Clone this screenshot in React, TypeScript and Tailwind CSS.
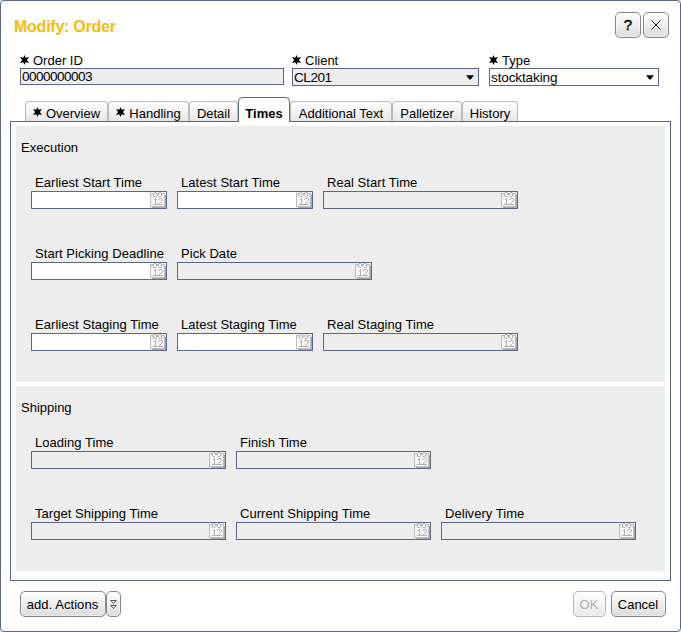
import React from "react";

function CalendarIcon() {
  return (
    <svg width="16" height="16" viewBox="0 0 16 16" shapeRendering="crispEdges" className="block shrink-0">
      <path d="M2 3h14v13H2z" fill="#a9a9a9" />
      <path d="M0 1h15v14H0z" fill="#bdbdbd" />
      <path d="M1 2h13v12H1z" fill="#e9e9e9" />
      <path d="M1 5h13v9H1z" fill="#f8f8f8" />
      <path d="M3 1h3v3H3zM9 1h3v3H9z" fill="#f5f5f5" />
      <path d="M4 0h2v1H4zM9 0h2v1H9zM3 1h1v3H3zM6 1h1v1H6zM8 1h1v1H8zM11 1h1v3h-1zM6 2h3v1H6zM4 4h2v1H4zM9 4h2v1H9z" fill="#b0b0b0" />
      <path d="M5 6h1v7H5zM4 7h1v1H4zM3 12h5v1H3zM9 6h3v1H9zM8 7h1v1H8zM12 7h1v2h-1zM11 9h1v1h-1zM10 10h1v1h-1zM9 11h1v1H9zM8 12h5v1H8z" fill="#b0b0b0" />
    </svg>
  );
}

function Star() {
  return (
    <svg width="9" height="10" viewBox="0 0 9 10" className="shrink-0">
      <path d="M4.5 0 5.7 2.7 9 2 6.9 5 9 8 5.7 7.3 4.5 10 3.3 7.3 0 8 2.1 5 0 2 3.3 2.7Z" fill="#000" />
    </svg>
  );
}

function HeadField({ label, value, box, select }: { label: string; value: string; box: string; select?: boolean }) {
  return (
    <div>
      <div className="flex h-[16px] items-center gap-[4px]">
        <Star />
        <span className="pt-[2px] leading-[16px]">{label}</span>
      </div>
      <div className={`flex items-center justify-between border border-[#5b6787] pl-px pr-[4px] text-[13.6px] leading-[15px] ${box}`}>
        <span>{value}</span>
        {select && (
          <svg width="8" height="5" viewBox="0 0 8 5" className="mt-px">
            <path d="M0 .3h8L4.6 4.4H3.4Z" />
          </svg>
        )}
      </div>
    </div>
  );
}

function DateField({ label, wide, editable }: { label: string; wide?: boolean; editable?: boolean }) {
  return (
    <div className={wide ? "w-[195px]" : "w-[136px]"}>
      <div className="h-[16px] whitespace-nowrap pl-[4px] leading-[16px] tracking-[0.05px]">{label}</div>
      <div className={`flex h-[18px] justify-end border border-[#5b6787] ${editable ? "bg-white" : "bg-[#ededed]"}`}>
        <CalendarIcon />
      </div>
    </div>
  );
}

function Tab({ label, width, star, active }: { label: string; width: string; star?: boolean; active?: boolean }) {
  const look = active
    ? "z-10 h-[25px] -mb-px rounded-t-[5px] border-[#5b6787] bg-white pt-[8px] font-bold"
    : "h-[20px] rounded-t-[4px] border-[#b9b9b9] bg-linear-to-b from-white to-[#e6e6e6] pt-[4px]";
  return (
    <div className={`relative flex items-center justify-center gap-[4px] whitespace-nowrap border border-b-0 leading-[16px] ${look} ${width}`}>
      {star && <span className="-mt-[3px]"><Star /></span>}
      <span>{label}</span>
    </div>
  );
}

const button = "flex h-[26px] items-center justify-center rounded-[5px] border border-[#858585] bg-linear-to-b from-white to-[#dcdcdc] shadow-[inset_0_0_0_1px_rgba(255,255,255,0.4)]";

export default function App() {
  return (
    <div className="h-[632px] w-[681px] bg-[#dfe2e8] font-['Liberation_Sans',Arial,sans-serif] text-[13px] text-black">
      <div className="flex h-full flex-col rounded-[4px] border border-[#5b6787] bg-white">
        <header className="flex h-[51px] items-start justify-between pl-[13px] pr-[11px] pt-[11px]">
          <h1 className="pt-[4px] text-[16px] font-bold leading-[22px] tracking-[-0.25px] text-[#fab90f]">Modify: Order</h1>
          <div className="flex gap-[2px]">
            <button className={`${button} w-[26px] text-[15px] [-webkit-text-stroke:0.4px_black]`}>?</button>
            <button className={`${button} w-[26px]`}>
              <svg width="10" height="10" viewBox="0 0 10 10"><path d="M.5.5l9 9M9.5.5l-9 9" stroke="#222" strokeWidth="1" /></svg>
            </button>
          </div>
        </header>

        <div className="flex h-[44px] items-start pl-[19px]">
          <div className="mr-[8px]"><HeadField label="Order ID" value="0000000003" box="h-[17px] w-[264px] bg-[#ededed] tracking-[-0.56px]" /></div>
          <div className="mr-[10px]"><HeadField label="Client" value="CL201" select box="h-[18px] w-[187px] bg-[#ededed] tracking-[-0.5px]" /></div>
          <HeadField label="Type" value="stocktaking" select box="h-[18px] w-[170px] bg-white tracking-[-0.15px]" />
        </div>

        <nav className="flex h-[25px] items-end pl-[24px]">
          <Tab label="Overview" star width="w-[83px]" />
          <Tab label="Handling" star width="w-[81px]" />
          <Tab label="Detail" width="w-[49px]" />
          <Tab label="Times" active width="w-[52px]" />
          <Tab label="Additional Text" width="w-[102px]" />
          <Tab label="Palletizer" width="w-[70px]" />
          <Tab label="History" width="w-[56px]" />
        </nav>

        <main className="ml-[9px] flex h-[460px] w-[661px] flex-col gap-[4px] border border-[#5b6787] px-[5px] pt-[4px]">
          <section className="h-[256px] bg-[#ededed] pl-[5px] pt-[14px]">
            <h2 className="h-[35px] leading-[16px]">Execution</h2>
            <div className="flex flex-col gap-[37px] pl-[10px]">
              <div className="flex gap-[10px]">
                <DateField label="Earliest Start Time" editable />
                <DateField label="Latest Start Time" editable />
                <DateField label="Real Start Time" wide />
              </div>
              <div className="flex gap-[10px]">
                <DateField label="Start Picking Deadline" editable />
                <DateField label="Pick Date" wide />
              </div>
              <div className="flex gap-[10px]">
                <DateField label="Earliest Staging Time" editable />
                <DateField label="Latest Staging Time" editable />
                <DateField label="Real Staging Time" wide />
              </div>
            </div>
          </section>
          <section className="h-[185px] bg-[#ededed] pl-[5px] pt-[14px]">
            <h2 className="h-[35px] leading-[16px]">Shipping</h2>
            <div className="flex flex-col gap-[37px] pl-[10px]">
              <div className="flex gap-[10px]">
                <DateField label="Loading Time" wide />
                <DateField label="Finish Time" wide />
              </div>
              <div className="flex gap-[10px]">
                <DateField label="Target Shipping Time" wide />
                <DateField label="Current Shipping Time" wide />
                <DateField label="Delivery Time" wide />
              </div>
            </div>
          </section>
        </main>

        <footer className="flex justify-between pl-[19px] pr-[14px] pt-[10px]">
          <div className="flex">
            <button className={`${button} w-[86px] pr-px pt-[2px] tracking-[0.05px]`}>add. Actions</button>
            <button className={`${button} w-[15px]`}>
              <svg width="7" height="9" viewBox="0 0 7 9" fill="none" stroke="#444" strokeWidth=".9">
                <path d="M.7.5h5.6L3.5 3.5ZM.7 5.5h5.6L3.5 8.5Z" />
              </svg>
            </button>
          </div>
          <div className="flex gap-[5px]">
            <button className={`${button} w-[33px] pr-px pt-[2px] text-[#777] opacity-60`}>OK</button>
            <button className={`${button} w-[55px] pr-px pt-[2px]`}>Cancel</button>
          </div>
        </footer>
      </div>
    </div>
  );
}
